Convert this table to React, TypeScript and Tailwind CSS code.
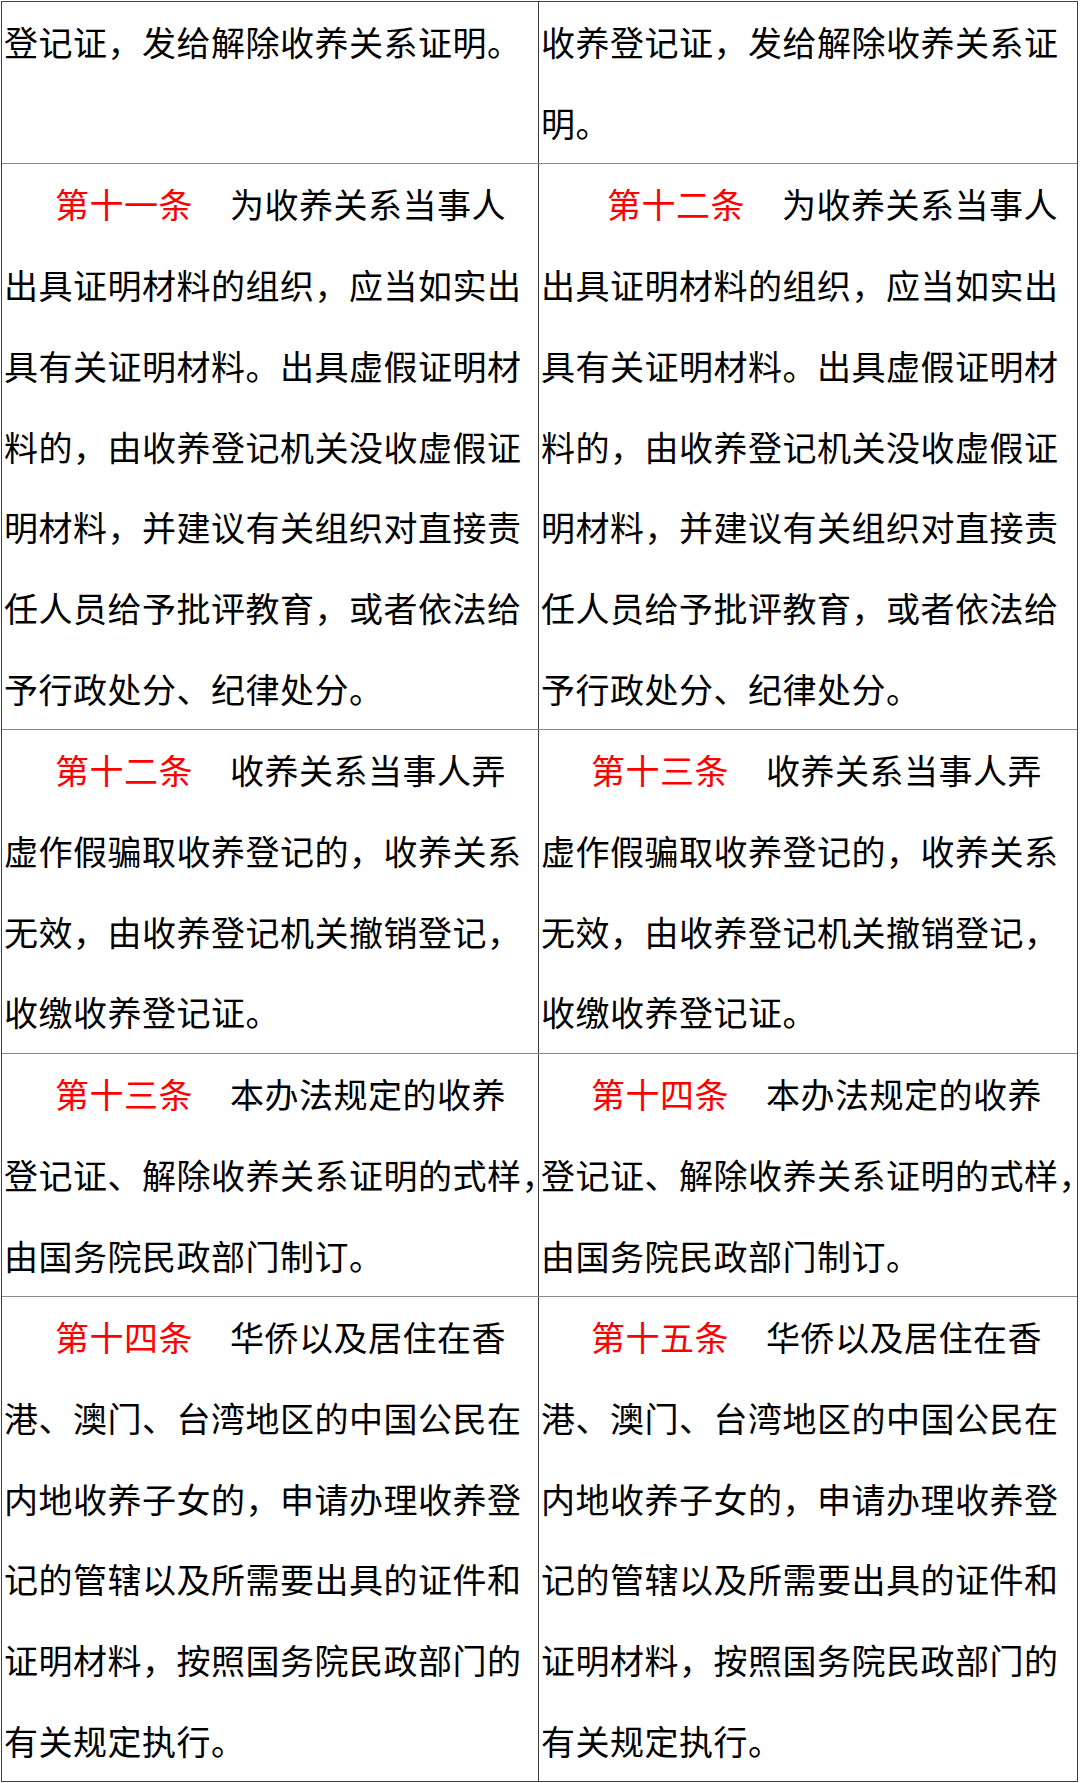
type Cell = {
  head?: string;
  first?: string;
  indent?: string;
  lines: string[];
};

type Row = { left: Cell; right: Cell };

const rows: Row[] = [
  {
    left: { lines: ["登记证，发给解除收养关系证明。"] },
    right: { lines: ["收养登记证，发给解除收养关系证", "明。"] },
  },
  {
    left: {
      head: "第十一条",
      first: "为收养关系当事人",
      indent: "pl-[51px]",
      lines: [
        "出具证明材料的组织，应当如实出",
        "具有关证明材料。出具虚假证明材",
        "料的，由收养登记机关没收虚假证",
        "明材料，并建议有关组织对直接责",
        "任人员给予批评教育，或者依法给",
        "予行政处分、纪律处分。",
      ],
    },
    right: {
      head: "第十二条",
      first: "为收养关系当事人",
      indent: "pl-[66px]",
      lines: [
        "出具证明材料的组织，应当如实出",
        "具有关证明材料。出具虚假证明材",
        "料的，由收养登记机关没收虚假证",
        "明材料，并建议有关组织对直接责",
        "任人员给予批评教育，或者依法给",
        "予行政处分、纪律处分。",
      ],
    },
  },
  {
    left: {
      head: "第十二条",
      first: "收养关系当事人弄",
      indent: "pl-[51px]",
      lines: ["虚作假骗取收养登记的，收养关系", "无效，由收养登记机关撤销登记，", "收缴收养登记证。"],
    },
    right: {
      head: "第十三条",
      first: "收养关系当事人弄",
      indent: "pl-[50px]",
      lines: ["虚作假骗取收养登记的，收养关系", "无效，由收养登记机关撤销登记，", "收缴收养登记证。"],
    },
  },
  {
    left: {
      head: "第十三条",
      first: "本办法规定的收养",
      indent: "pl-[51px]",
      lines: ["登记证、解除收养关系证明的式样，", "由国务院民政部门制订。"],
    },
    right: {
      head: "第十四条",
      first: "本办法规定的收养",
      indent: "pl-[50px]",
      lines: ["登记证、解除收养关系证明的式样，", "由国务院民政部门制订。"],
    },
  },
  {
    left: {
      head: "第十四条",
      first: "华侨以及居住在香",
      indent: "pl-[51px]",
      lines: [
        "港、澳门、台湾地区的中国公民在",
        "内地收养子女的，申请办理收养登",
        "记的管辖以及所需要出具的证件和",
        "证明材料，按照国务院民政部门的",
        "有关规定执行。",
      ],
    },
    right: {
      head: "第十五条",
      first: "华侨以及居住在香",
      indent: "pl-[50px]",
      lines: [
        "港、澳门、台湾地区的中国公民在",
        "内地收养子女的，申请办理收养登",
        "记的管辖以及所需要出具的证件和",
        "证明材料，按照国务院民政部门的",
        "有关规定执行。",
      ],
    },
  },
];

// a 16-char line hangs its closing comma past the cell edge, like the source doc
function Line({ text }: { text: string }) {
  if (text.length > 15) {
    return (
      <div className="whitespace-nowrap">
        {text.slice(0, -1)}
        <span className="tracking-[-20px]">{text.slice(-1)}</span>
      </div>
    );
  }
  return <div className="whitespace-nowrap">{text}</div>;
}

function CellView({ cell }: { cell: Cell }) {
  return (
    <div className="pl-[2px]">
      {cell.head && (
        <div className={`${cell.indent} whitespace-nowrap`}>
          <span className="text-[#ff0000]">{cell.head}</span>
          <span className="ml-[37px]">{cell.first}</span>
        </div>
      )}
      {cell.lines.map((line, i) => (
        <Line key={i} text={line} />
      ))}
    </div>
  );
}

export default function App() {
  return (
    <div
      className="bg-white min-h-[1783px] pt-[1px] pl-[1px] text-black text-[34px] leading-[80.7px] tracking-[0.5px]"
      style={{ fontFamily: '"Noto Sans CJK SC", "Noto Sans", sans-serif' }}
    >
      <div className="w-[1077px] border border-[#404040]">
        {rows.map((row, i) => (
          <div
            key={i}
            className={`flex ${i < rows.length - 1 ? "border-b border-[#8a8a8a]" : ""}`}
          >
            <div className="w-[537px] shrink-0 border-r border-[#3a3a3a]">
              <CellView cell={row.left} />
            </div>
            <div className="flex-1">
              <CellView cell={row.right} />
            </div>
          </div>
        ))}
      </div>
    </div>
  );
}
